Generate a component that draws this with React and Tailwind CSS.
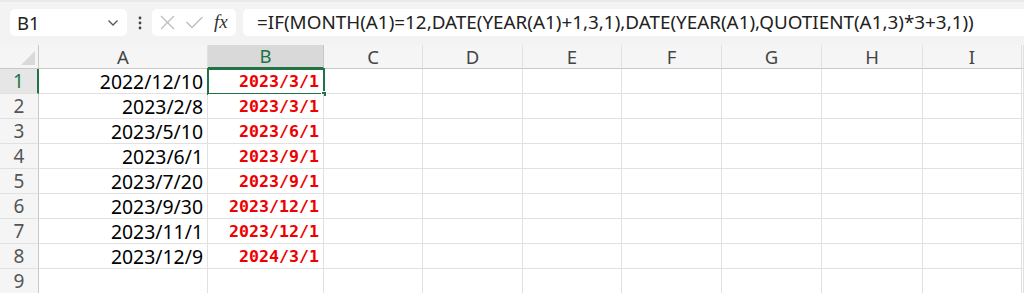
import React from "react";

const cols = ["A", "B", "C", "D", "E", "F", "G", "H", "I", ""];
const dataA = ["2022/12/10", "2023/2/8", "2023/5/10", "2023/6/1", "2023/7/20", "2023/9/30", "2023/11/1", "2023/12/9", ""];
const dataB = ["2023/3/1", "2023/3/1", "2023/6/1", "2023/9/1", "2023/9/1", "2023/12/1", "2023/12/1", "2024/3/1", ""];

const ui = { fontFamily: '"Noto Sans", "Open Sans", sans-serif' };
const mono = { fontFamily: '"DejaVu Sans Mono", "Liberation Mono", monospace' };

function Header() {
  return (
    <>
      <div className="relative h-[24px] border-r border-b border-[#c8c8c8] bg-[#f5f5f5]">
        <svg className="absolute right-[3px] bottom-[3px]" width="14" height="14" viewBox="0 0 14 14">
          <polygon points="14,0 14,14 0,14" fill="#d9d9d9" />
        </svg>
      </div>
      {cols.map((c, i) => (
        <div
          key={i}
          className={
            "flex h-[24px] items-center justify-center border-r text-[18.5px] " +
            (c === "B"
              ? "border-[#c8c8c8] border-b-2 border-b-[#217346] bg-[#d9d9d9] text-[#217346]"
              : "border-[#e1e1e1] border-b border-b-[#c8c8c8] bg-[#f5f5f5] text-[#444444]")
          }
          style={ui}
        >
          {c}
        </div>
      ))}
    </>
  );
}

function Row({ n }) {
  const a = dataA[n - 1];
  const b = dataB[n - 1];
  const sel = n === 1;
  return (
    <>
      <div
        className={
          "flex h-[25px] items-center justify-center border-b border-[#e1e1e1] text-[19px] " +
          (sel ? "border-r-2 border-r-[#217346] bg-[#e6e6e6] text-[#217346]" : "border-r border-r-[#c8c8c8] bg-[#f5f5f5] text-[#555555]")
        }
        style={ui}
      >
        {n}
      </div>
      <div className="flex h-[25px] items-center justify-end border-r border-b border-[#e1e1e1] bg-white pr-[4px] pt-[1px] text-[19.4px] leading-none text-black" style={ui}>
        {a}
      </div>
      <div className="relative flex h-[25px] items-center justify-end border-r border-b border-[#e1e1e1] bg-white pr-[4px] pt-[2px] text-[16.6px] font-bold leading-none text-[#ee0000]" style={mono}>
        {b}
        {sel && (
          <div className="absolute left-[-1px] top-[-1px] h-[27px] w-[118px] border-2 border-[#217346]">
            <div className="absolute right-[-4px] bottom-[-4px] h-[6px] w-[6px] border border-white bg-[#217346]" />
          </div>
        )}
      </div>
      {cols.slice(2).map((c, i) => (
        <div key={i} className="h-[25px] border-r border-b border-[#e1e1e1] bg-white" />
      ))}
    </>
  );
}

export default function App() {
  return (
    <div className="h-[293px] w-[1024px] overflow-hidden bg-white" style={ui}>
      <div className="flex h-[45px] items-start border-t-2 border-[#e9e9e9] bg-[#f3f3f3] pt-[7px]">
        <div className="ml-[10px] flex h-[27px] w-[117px] items-center justify-between rounded-[5px] bg-white pl-[7px] pr-[8px] text-[18.5px] text-[#222222]">
          <span>B1</span>
          <svg width="12" height="8" viewBox="0 0 12 8">
            <polyline points="1.5,1.5 6,6 10.5,1.5" fill="none" stroke="#555555" strokeWidth="1.3" />
          </svg>
        </div>
        <div className="flex h-[27px] w-[25px] items-center justify-center">
          <svg width="4" height="14" viewBox="0 0 4 14">
            <circle cx="2" cy="2" r="1.4" fill="#444444" />
            <circle cx="2" cy="7" r="1.4" fill="#444444" />
            <circle cx="2" cy="12" r="1.4" fill="#444444" />
          </svg>
        </div>
        <div className="flex h-[27px] w-[84px] items-center rounded-[5px] bg-white pl-[7px]">
          <svg width="17" height="17" viewBox="0 0 17 17">
            <path d="M2 2 L15 15 M15 2 L2 15" stroke="#bdbdbd" strokeWidth="1.3" fill="none" />
          </svg>
          <svg className="ml-[9px]" width="19" height="15" viewBox="0 0 19 15">
            <path d="M1.5 7 L7 12.5 L17.5 2" stroke="#bdbdbd" strokeWidth="1.3" fill="none" />
          </svg>
          <span className="ml-[10px] text-[19px] italic text-[#333333]" style={{ fontFamily: '"Liberation Serif", "DejaVu Serif", serif' }}>
            fx
          </span>
        </div>
        <div className="ml-[7px] flex h-[27px] flex-1 items-center rounded-l-[5px] bg-white pl-[14px] text-[18.85px] text-[#222222] whitespace-nowrap">
          =IF(MONTH(A1)=12,DATE(YEAR(A1)+1,3,1),DATE(YEAR(A1),QUOTIENT(A1,3)*3+3,1))
        </div>
      </div>
      <div className="grid grid-cols-[39px_169px_116px_99px_100px_99px_100px_100px_101px_99px_1fr]">
        <Header />
        {[1, 2, 3, 4, 5, 6, 7, 8, 9].map((n) => (
          <Row key={n} n={n} />
        ))}
      </div>
    </div>
  );
}
